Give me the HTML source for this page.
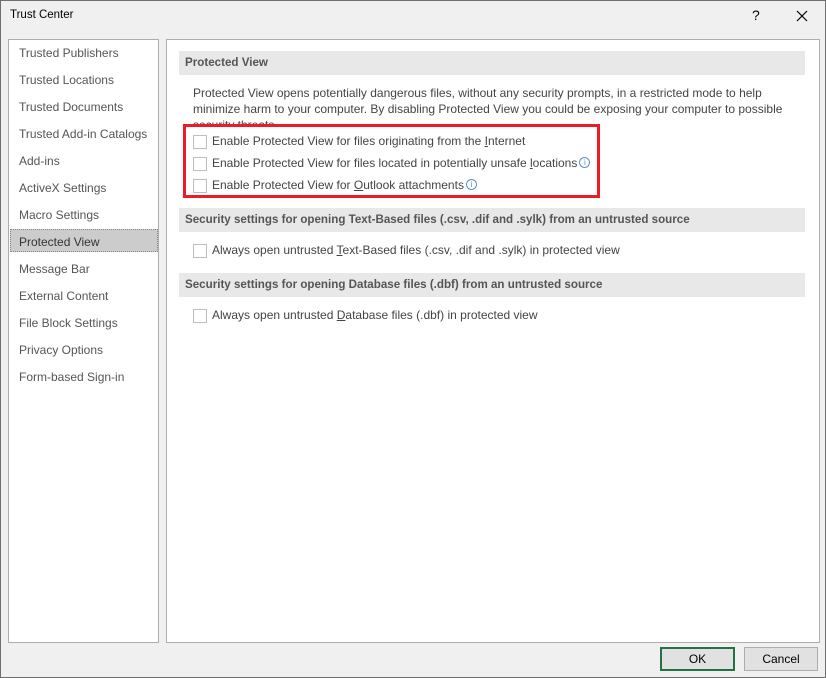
<!DOCTYPE html>
<html><head><style>
body{margin:0;width:826px;height:678px;background:#f0f0f0;font-family:"Liberation Sans",sans-serif;font-size:12px;color:#444;position:relative;overflow:hidden}
.abs{position:absolute}
.frame{left:0;top:0;width:824px;height:676px;border:1px solid #6e6e6e}
.title{left:10px;top:9px;color:#000;font-size:11.5px}
.left{left:8px;top:39px;width:149px;height:602px;background:#fff;border:1px solid #adadad}
.nav{position:absolute;left:10px;color:#555;white-space:nowrap}
.sel{left:1px;top:189px;height:23px;background:#cccccc;border:1px dotted #888;box-sizing:border-box;width:148px}
.right{left:166px;top:39px;width:652px;height:602px;background:#fff;border:1px solid #adadad}
.hdr{position:absolute;left:12px;width:626px;height:24px;background:#e8e8e8;font-weight:bold;font-size:11.6px;color:#555;line-height:23px;text-indent:6px}
.cb{position:absolute;left:26px;width:12px;height:12px;border:1px solid #bdbdbd;background:#fff}
.lbl{position:absolute;left:45px;white-space:nowrap;color:#444}
.info{display:inline-block;width:9px;height:9px;border:1px solid #5a8fd0;border-radius:50%;font-size:8px;line-height:9px;text-align:center;color:#5a8fd0;margin-left:2px;vertical-align:2px}
.btn{position:absolute;top:647px;width:72px;height:22px;background:#e1e1e1;border:1px solid #adadad;text-align:center;line-height:22px;color:#000}
</style></head><body>
<div class="abs frame"></div>
<div class="abs title">Trust Center</div>
<div class="abs" style="left:752px;top:7px;font-size:14px;color:#000">?</div>
<svg class="abs" style="left:796px;top:10px" width="12" height="12"><path d="M1 1L11 11M11 1L1 11" stroke="#000" stroke-width="1.2"/></svg>
<div class="abs left">
<div class="abs sel"></div>
<div class="nav" style="top:6px">Trusted Publishers</div>
<div class="nav" style="top:33px">Trusted Locations</div>
<div class="nav" style="top:60px">Trusted Documents</div>
<div class="nav" style="top:87px">Trusted Add-in Catalogs</div>
<div class="nav" style="top:114px">Add-ins</div>
<div class="nav" style="top:141px">ActiveX Settings</div>
<div class="nav" style="top:168px">Macro Settings</div>
<div class="nav" style="top:195px;color:#333">Protected View</div>
<div class="nav" style="top:222px">Message Bar</div>
<div class="nav" style="top:249px">External Content</div>
<div class="nav" style="top:276px">File Block Settings</div>
<div class="nav" style="top:303px">Privacy Options</div>
<div class="nav" style="top:330px">Form-based Sign-in</div>
</div>
<div class="abs right">
<div class="hdr" style="top:11px">Protected View</div>
<div class="abs" style="left:26px;top:45px;width:600px;height:48px;line-height:16px;overflow:hidden;color:#444">Protected View opens potentially dangerous files, without any security prompts, in a restricted mode to help minimize harm to your computer. By disabling Protected View you could be exposing your computer to possible security threats.</div>
<div class="abs" style="left:16px;top:84px;width:411px;height:68px;border:3px solid #ed1c24;background:#fff"></div>
<div class="cb" style="top:95px"></div><div class="lbl" style="top:94px">Enable Protected View for files originating from the <u>I</u>nternet</div>
<div class="cb" style="top:117px"></div><div class="lbl" style="top:116px">Enable Protected View for files located in potentially unsafe <u>l</u>ocations<span class="info">i</span></div>
<div class="cb" style="top:139px"></div><div class="lbl" style="top:138px">Enable Protected View for <u>O</u>utlook attachments<span class="info">i</span></div>
<div class="hdr" style="top:168px">Security settings for opening Text-Based files (.csv, .dif and .sylk) from an untrusted source</div>
<div class="cb" style="top:204px"></div><div class="lbl" style="top:203px">Always open untrusted <u>T</u>ext-Based files (.csv, .dif and .sylk) in protected view</div>
<div class="hdr" style="top:233px">Security settings for opening Database files (.dbf) from an untrusted source</div>
<div class="cb" style="top:269px"></div><div class="lbl" style="top:268px">Always open untrusted <u>D</u>atabase files (.dbf) in protected view</div>
</div>
<div class="btn" style="left:660px;border:2px solid #217346;width:71px;height:20px;line-height:20px">OK</div>
<div class="btn" style="left:744px">Cancel</div>
</body></html>
